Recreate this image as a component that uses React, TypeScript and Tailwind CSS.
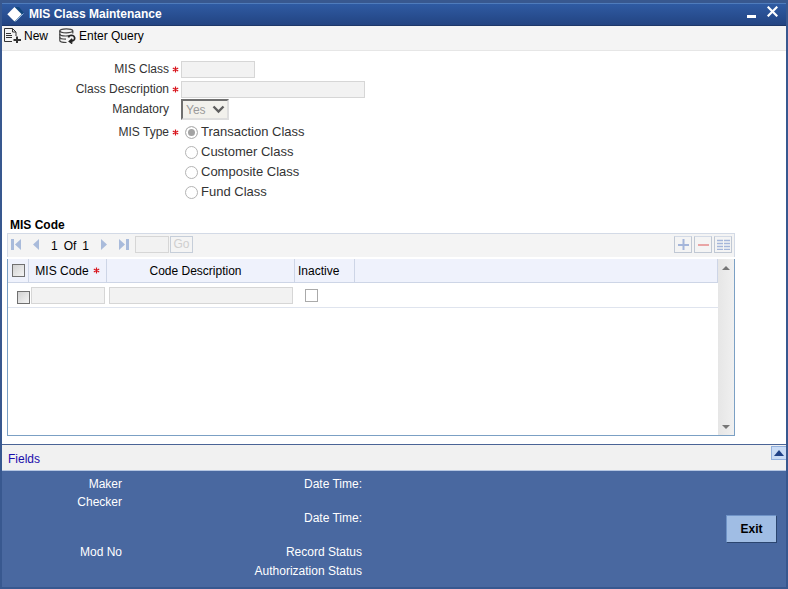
import { useState } from 'react';

const misTypes = ['Transaction Class', 'Customer Class', 'Composite Class', 'Fund Class'];

const auditRows = [
  { left: 'Maker', right: 'Date Time:', height: 'h-[19px]' },
  { left: 'Checker', right: '', height: 'h-[17px]' },
  { left: '', right: 'Date Time:', height: 'h-[15px]' },
  { left: '', right: '', height: 'h-[17px]' },
  { left: 'Mod No', right: 'Record Status', height: 'h-[19px]' },
  { left: '', right: 'Authorization Status', height: 'h-[19px]' },
];

const inputClass = 'block h-[17px] border border-[#d6d6d6] bg-[#f2f2f2]';
const rowCheckClass = 'block size-[13px] appearance-none border border-[#707070] bg-linear-to-br from-[#d2d2d2] to-[#f4f4f4]';
const gridButtonClass = 'flex h-[17px] w-[18px] items-center justify-center border border-[#c0c8d4] border-t-[#d3dae6] bg-[#f4f4f4]';

function Required() {
  return (
    <svg width="7" height="7" viewBox="0 0 7 7" stroke="#d8141c" strokeWidth="1.2" aria-hidden="true">
      <path d="M3.5 .5v6M.8 2l5.4 3M6.2 2L.8 5" />
    </svg>
  );
}

function TitleBar() {
  return (
    <header className="flex h-[23px] items-center border-t border-b border-t-[#4f7cbc] border-b-[#1d3768] bg-linear-to-b from-[#2f5ba3] to-[#234482] pr-2 pb-[2px] pl-1 text-white">
      <svg width="19" height="18" viewBox="0 0 19 18" aria-hidden="true">
        <path d="M9 2h4l5 6-9 9-2-1z" fill="#12477f" />
        <path d="M17.500 8.500l-8 8" stroke="#8fb4dc" />
        <path d="M8.500 2l7.200 7.200-7.200 7.200-7.200-7.200z" fill="#fff" />
      </svg>
      <h1 className="ml-1 flex-1 font-bold">MIS Class Maintenance</h1>
      <button type="button" aria-label="Minimize" className="mr-[11px]">
        <svg width="9" height="12" viewBox="0 0 9 12">
          <path d="M0 7h9v3H0z" fill="#fff" />
        </svg>
      </button>
      <button type="button" aria-label="Close" className="mb-1">
        <svg width="11" height="11" viewBox="0 0 11 11" stroke="#fff" strokeWidth="2.2">
          <path d="M.7.7l9.600 9.600M10.300.7L.7 10.300" />
        </svg>
      </button>
    </header>
  );
}

function Toolbar() {
  return (
    <nav className="flex h-[25px] items-center border-b border-[#e6e6e6] bg-[#f4f4f4] pb-[5px] pl-[2px] text-black">
      <button type="button" className="flex items-center gap-[3px]">
        <svg width="17" height="15" viewBox="0 0 17 15" fill="none" stroke="#333" aria-hidden="true">
          <path d="M8 13.500H.5V.5h8l3.500 3.500V8M8.500.5v3.500H12" />
          <path d="M2 5.500h5M2 7.500h6M2 9.500h6" />
          <path d="M9.500 12h7.500M13 8.500V15" strokeWidth="2" />
        </svg>
        New
      </button>
      <button type="button" className="ml-[11px] flex items-center gap-[3px]">
        <svg width="17" height="16" viewBox="0 0 17 16" fill="none" stroke="#444" strokeWidth="1.200" aria-hidden="true">
          <ellipse cx="7.300" cy="2.800" rx="6.500" ry="2" />
          <path d="M.8 2.800v9.700c0 1 3 2 6.700 2M13.800 2.800v2.700" />
          <path d="M.8 6c0 1.200 3 2 6 2s3-.2 4-.5M.8 9.300c0 1.200 3 1.900 6.200 1.900" />
          <path d="M9.500 9.500c.5-2 2.500-2.500 4.200-2 2 .8 2.500 3 1.300 4.500-.8 1-2 1.300-3 1.500M13.300 11l-2.800 2.500 2.800 2" stroke="#222" strokeWidth="1.700" />
        </svg>
        Enter Query
      </button>
    </nav>
  );
}

function ClassForm() {
  const [misType, setMisType] = useState(misTypes[0]);

  return (
    <div className="grid grid-cols-[167px_12px_1fr] items-center pt-2 text-[#333]">
      <label htmlFor="mis-class" className="text-right">MIS Class</label>
      <span className="flex justify-center"><Required /></span>
      <div className="flex h-5 items-center">
        <input id="mis-class" disabled className={`${inputClass} w-[74px]`} />
      </div>

      <label htmlFor="class-desc" className="text-right">Class Description</label>
      <span className="flex justify-center"><Required /></span>
      <div className="flex h-5 items-center">
        <input id="class-desc" disabled className={`${inputClass} w-[184px]`} />
      </div>

      <label htmlFor="mandatory" className="self-start pt-0.5 text-right">Mandatory</label>
      <span />
      <div className="relative w-12">
        <select
          id="mandatory"
          disabled
          className="block h-[21px] w-full appearance-none border-2 border-t-[#6f6f6f] border-r-[#dedede] border-b-[#dedede] border-l-[#6f6f6f] bg-[#f2f1ec] pl-[3px] text-[#9a9a9a] opacity-100"
        >
          <option>Yes</option>
        </select>
        <svg className="pointer-events-none absolute top-1.5 right-1" width="13" height="9" viewBox="0 0 13 9" fill="none" stroke="#5f5f5f" strokeWidth="2.400" aria-hidden="true">
          <path d="M1.500 1.500l5 5 5-5" />
        </svg>
      </div>

      <span id="mis-type" className="mt-0.5 self-start text-right leading-5">MIS Type</span>
      <span className="mt-0.5 flex h-5 items-center justify-center self-start"><Required /></span>
      <div role="radiogroup" aria-labelledby="mis-type" className="mt-0.5 pl-1 text-[13px]">
        {misTypes.map(type => (
          <label key={type} className="flex h-5 items-center gap-[3px]">
            <input
              type="radio"
              name="misType"
              disabled
              checked={misType === type}
              onChange={() => setMisType(type)}
              className="size-[13px] appearance-none rounded-full border border-[#b4b4b4] bg-white checked:bg-[#a3a3a3] checked:inset-ring-2 checked:inset-ring-white"
            />
            {type}
          </label>
        ))}
      </div>
    </div>
  );
}

function Pager() {
  return (
    <div className="flex h-6 items-center border border-b-0 border-[#d3dae6] bg-[#f4f4f4] pr-[2px] pb-[3px] pl-[3px] text-black">
      <button type="button" disabled aria-label="First">
        <svg width="11" height="11" viewBox="0 0 11 11" fill="#a9bbdb"><path d="M0 0h3v11H0zM10 0v11L4 5.500z" /></svg>
      </button>
      <button type="button" disabled aria-label="Previous" className="ml-[11px]">
        <svg width="7" height="11" viewBox="0 0 7 11" fill="#a9bbdb"><path d="M6 0v11L0 5.500z" /></svg>
      </button>
      <span className="mt-1 ml-[11px] flex gap-1.5"><span>1</span><span>Of</span><span>1</span></span>
      <button type="button" disabled aria-label="Next" className="ml-3">
        <svg width="7" height="11" viewBox="0 0 7 11" fill="#a9bbdb"><path d="M0 0v11l6-5.500z" /></svg>
      </button>
      <button type="button" disabled aria-label="Last" className="ml-[11px]">
        <svg width="11" height="11" viewBox="0 0 11 11" fill="#a9bbdb"><path d="M0 0v11l6-5.500zM7 0h3v11H7z" /></svg>
      </button>
      <input aria-label="Go to record" disabled className={`${inputClass} ml-[5px] w-[34px]`} />
      <button type="button" disabled className="ml-px h-[17px] w-[23px] border border-[#c6ced9] leading-[15px] text-[#cfcfcf]">Go</button>
      <div className="ml-auto flex gap-[2px]">
        <button type="button" disabled aria-label="Add row" className={gridButtonClass}>
          <svg width="11" height="11" viewBox="0 0 11 11" stroke="#a5b6da" strokeWidth="2"><path d="M5.500 0v11M0 6h11" /></svg>
        </button>
        <button type="button" disabled aria-label="Delete row" className={gridButtonClass}>
          <svg width="11" height="11" viewBox="0 0 11 11" stroke="#e9a5a5" strokeWidth="2"><path d="M0 6h11" /></svg>
        </button>
        <button type="button" disabled aria-label="Single record view" className={gridButtonClass}>
          <svg width="13" height="11" viewBox="0 0 13 11" stroke="#a5b6da"><path d="M0 1.500h6M7 1.500h6M0 4.500h6M7 4.500h6M0 7.500h6M7 7.500h6M0 10.500h6M7 10.500h6" strokeWidth="1.500" /></svg>
        </button>
      </div>
    </div>
  );
}

function CodeTable() {
  return (
    <div className="mt-[2px] flex h-[177px] border border-t-0 border-[#7ba0c4]">
      <div className="flex-1">
        <table className="w-full table-fixed border-separate border-spacing-0 text-black">
          <thead>
            <tr className="h-6 bg-[#eff2fc]">
              <th className="w-[21px] border-r border-b border-[#cdd5e6] pl-1">
                <input type="checkbox" aria-label="Select all" className={rowCheckClass} />
              </th>
              <th className="w-[78px] border-r border-b border-[#cdd5e6] font-normal">
                <span className="flex items-center justify-center gap-1">MIS Code <Required /></span>
              </th>
              <th className="w-[188px] border-r border-b border-[#cdd5e6] pr-2.5 font-normal">Code Description</th>
              <th className="w-[60px] border-r border-b border-[#cdd5e6] pl-[3px] text-left font-normal">Inactive</th>
              <th className="border-r border-b border-[#cdd5e6]" />
            </tr>
          </thead>
          <tbody>
            <tr className="h-[25px]">
              <td className="border-b border-[#dfe4ee] pt-1 pl-[9px]">
                <input type="checkbox" aria-label="Select row" className={rowCheckClass} />
              </td>
              <td className="border-b border-[#dfe4ee] pl-[2px]">
                <input aria-label="MIS Code" disabled className={`${inputClass} w-[74px]`} />
              </td>
              <td className="border-b border-[#dfe4ee] pl-[2px]">
                <input aria-label="Code Description" disabled className={`${inputClass} w-[184px]`} />
              </td>
              <td className="border-b border-[#dfe4ee] pl-[10px]">
                <input type="checkbox" aria-label="Inactive" disabled className="block size-[13px] appearance-none border border-[#aaa] bg-white" />
              </td>
              <td className="border-b border-[#dfe4ee]" />
            </tr>
          </tbody>
        </table>
      </div>
      <div className="flex w-4 flex-col items-center justify-between bg-linear-to-r from-[#e6e6e6] to-[#f0f0f0] pt-[7px] pb-1.5">
        <svg width="8" height="4" viewBox="0 0 8 4" fill="#777"><path d="M4 0l4 4H0z" /></svg>
        <svg width="8" height="4" viewBox="0 0 8 4" fill="#777"><path d="M0 0h8L4 4z" /></svg>
      </div>
    </div>
  );
}

function AuditFooter() {
  return (
    <footer className="mt-2 border-t border-[#4a6496]">
      <div className="flex h-[26px] items-center justify-between border-b border-[#b5c6e2] bg-[#f1f1f1] pl-1.5">
        <a href="#fields" className="pt-0.5 text-[#1a0dab]">Fields</a>
        <button type="button" aria-label="Expand" className="mt-px flex h-[14px] w-[15px] items-center justify-center self-start border border-r-0 border-[#93b1de] bg-[#c9dbf5]">
          <svg width="10" height="6" viewBox="0 0 10 6" fill="#1f4187"><path d="M5 0l5 6H0z" /></svg>
        </button>
      </div>
      <div className="flex items-center bg-[#4968a0] pt-[3px] pr-[9px] pb-[7px] text-white">
        <div className="flex-1">
          {auditRows.map((row, i) => (
            <div key={i} className={`flex items-center text-right ${row.height}`}>
              <span className="w-[120px]">{row.left}</span>
              <span className="w-[240px]">{row.right}</span>
            </div>
          ))}
        </div>
        <button type="button" className="mt-1 h-7 w-[51px] border border-t-[#6f93c7] border-r-[#2b456f] border-b-[#2b456f] border-l-[#6f93c7] bg-[#a0bde4] font-bold text-black">
          Exit
        </button>
      </div>
    </footer>
  );
}

export default function App() {
  return (
    <div className="flex min-h-screen flex-col border-2 border-t-[3px] border-[#38588f] bg-white font-['Liberation_Sans',Arial,sans-serif] text-[12px] leading-4">
      <TitleBar />
      <Toolbar />
      <main className="flex-1">
        <ClassForm />
        <section className="mt-[15px] mr-[51px] ml-[5px]">
          <h2 className="pl-[3px] font-bold text-black">MIS Code</h2>
          <Pager />
          <CodeTable />
        </section>
      </main>
      <AuditFooter />
    </div>
  );
}
